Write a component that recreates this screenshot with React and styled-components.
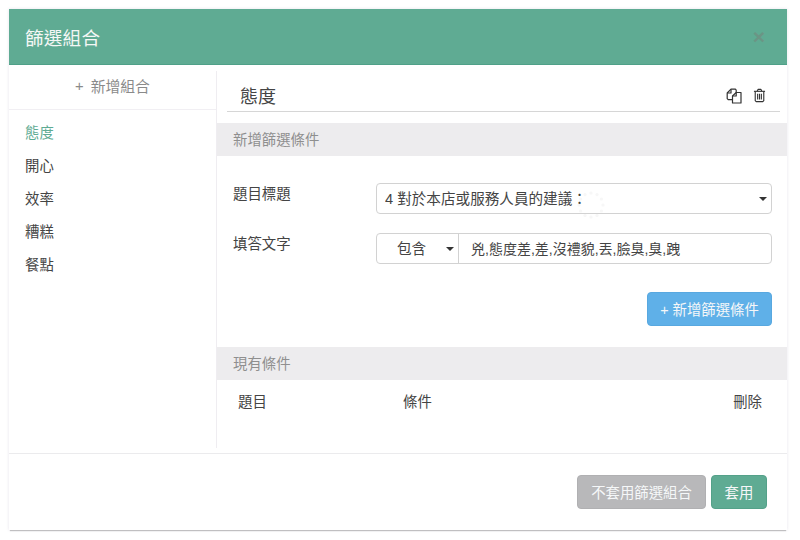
import React from "react";
import styled, { createGlobalStyle } from "styled-components";

const GlobalStyle = createGlobalStyle`
  html, body {
    margin: 0;
    padding: 0;
    background: #fff;
    font-family: "Liberation Sans", "Noto Sans CJK TC", sans-serif;
    font-size: 14.4px;
    color: #444;
  }
  * { box-sizing: border-box; }
`;

const Page = styled.div`
  width: 800px;
  height: 540px;
  padding: 9px 13px 9px 9px;
`;

const Modal = styled.div`
  width: 778px;
  height: 521px;
  display: flex;
  flex-direction: column;
  background: #fff;
  box-shadow: 0 2px 1px -1px rgba(0, 0, 0, 0.22), 0 0 3px rgba(80, 60, 110, 0.14);
`;

const Header = styled.div`
  height: 56px;
  flex: none;
  display: flex;
  align-items: center;
  justify-content: space-between;
  padding: 0 22px 0 16px;
  background: #5fab93;
  border-bottom: 1px solid #4fa088;
`;

const Title = styled.div`
  color: #f4f7f5;
  font-size: 18.6px;
  letter-spacing: 0.2px;
`;

const Close = styled.span`
  color: #6b9585;
  font-size: 21px;
  font-weight: 700;
  line-height: 1;
`;

const Body = styled.div`
  flex: 1;
  display: flex;
  min-height: 0;
`;

const Sidebar = styled.div`
  width: 208px;
  flex: none;
  height: 377px;
  margin-top: 6px;
  border-right: 1px solid #efedf1;
`;

const AddGroup = styled.div`
  height: 39px;
  padding-bottom: 9px;
  display: flex;
  align-items: center;
  justify-content: center;
  gap: 7px;
  font-size: 14.8px;
  color: #8a8a8a;
  border-bottom: 1px solid #f1eff3;
`;

const GroupList = styled.ul`
  list-style: none;
  margin: 7px 0 0;
  padding: 0 0 0 16px;
`;

const GroupItem = styled.li`
  height: 33px;
  line-height: 33px;
  color: ${(p) => (p.$active ? "#5fab93" : "#444")};
`;

const Main = styled.div`
  flex: 1;
  min-width: 0;
`;

const NameRow = styled.div`
  height: 47px;
  margin: 0 7px 11px 10px;
  padding: 14px 14px 0 13px;
  display: flex;
  align-items: center;
  justify-content: space-between;
  border-bottom: 1px solid #d6d6d6;
`;

const Name = styled.div`
  font-size: 18px;
  color: #444;
`;

const IconGroup = styled.div`
  display: flex;
  align-items: center;
  gap: 11px;
  color: #333;
  margin-top: 1px;
`;

const SectionBar = styled.div`
  height: 33px;
  line-height: 35px;
  padding-left: 16px;
  background: #edecee;
  color: #8f8f8f;
`;

const Form = styled.div`
  padding: 27px 15px 0 16px;
  display: flex;
  flex-direction: column;
  gap: 19px;
`;

const FormRow = styled.div`
  display: flex;
  align-items: center;
  height: 31px;
`;

const Label = styled.label`
  width: 143px;
  flex: none;
  margin-top: -12px;
  color: #444;
`;

const Control = styled.div`
  flex: 1;
  display: flex;
  height: 31px;
  border: 1px solid #d2d2d2;
  border-radius: 4px;
  background: #fff;
`;

const SelectWrap = styled.div`
  position: relative;
  flex: ${(p) => (p.$compact ? "none" : "1")};
  width: ${(p) => (p.$compact ? "82px" : "auto")};
  border-right: ${(p) => (p.$compact ? "1px solid #d2d2d2" : "none")};

  &::after {
    content: "";
    position: absolute;
    top: 13px;
    right: ${(p) => (p.$compact ? "4px" : "4px")};
    border-left: 4.5px solid transparent;
    border-right: 4.5px solid transparent;
    border-top: 4.5px solid #333;
    pointer-events: none;
  }
`;

const Select = styled.select`
  appearance: none;
  width: 100%;
  height: 100%;
  border: 0;
  outline: 0;
  background: transparent;
  font: inherit;
  font-size: 14.6px;
  color: #444;
  padding: 0 0 0 ${(p) => (p.$center ? "20px" : "8px")};
`;

const TextInput = styled.input`
  flex: 1;
  min-width: 0;
  border: 0;
  outline: 0;
  background: transparent;
  font: inherit;
  font-size: 14px;
  color: #444;
  padding: 0 12px 2px;
  border-radius: 0 4px 4px 0;
`;

const AddRow = styled.div`
  display: flex;
  justify-content: flex-end;
  padding: 28px 15px 21px 0;
`;

const Button = styled.button`
  height: 34px;
  padding: 0 0 2px;
  width: ${(p) => p.$width};
  border: 1px solid ${(p) => p.$edge};
  border-radius: 4px;
  background: ${(p) => p.$fill};
  color: #f5f7f8;
  font: inherit;
`;

const Columns = styled.div`
  display: grid;
  grid-template-columns: 165px 1fr auto;
  padding: 14px 25px 0 21px;
  color: #444;
  line-height: 16px;
`;

const Footer = styled.div`
  flex: none;
  height: 77px;
  border-top: 1px solid #ebebed;
  display: flex;
  justify-content: flex-end;
  align-items: flex-start;
  gap: 5px;
  padding: 21px 20px 0 0;
`;

const Spinner = styled.svg`
  position: absolute;
  left: 573px;
  top: 187px;
  opacity: 0.4;
`;

function CopyIcon() {
  return (
    <svg width="16" height="16" viewBox="0 0 16 16" fill="none" stroke="currentColor" strokeWidth="1.2" strokeLinejoin="round">
      <path d="M10.2 4.5V2.2L9.4 1.2H5L1.2 5V10.6L2.2 11.6H6" />
      <path d="M5 1.2V5H1.2" />
      <path d="M6.5 15V8L10.2 4.5H15V15Z" fill="#fff" />
      <path d="M10.2 4.5V8H6.5" />
    </svg>
  );
}

function TrashIcon() {
  return (
    <svg width="13" height="15" viewBox="0 0 14 16" fill="none" stroke="currentColor" strokeWidth="1.2" strokeLinejoin="round">
      <path d="M1 3.5H13" />
      <path d="M4.6 3.5L5.4 1.4H8.6L9.4 3.5" />
      <path d="M2.4 3.5V13.6L3.4 14.6H10.6L11.6 13.6V3.5" />
      <path d="M5 6V12.4M7 6V12.4M9 6V12.4" />
    </svg>
  );
}

function LoadingDots() {
  const dots = Array.from({ length: 12 }, (_, i) => {
    const a = (i / 12) * Math.PI * 2;
    return <circle key={i} cx={18 + Math.cos(a) * 12} cy={18 + Math.sin(a) * 12} r="1.6" fill="#ececec" />;
  });
  return (
    <Spinner width="36" height="36" viewBox="0 0 36 36">
      {dots}
    </Spinner>
  );
}

export default function App() {
  const groups = ["態度", "開心", "效率", "糟糕", "餐點"];
  return (
    <Page>
      <GlobalStyle />
      <Modal>
        <Header>
          <Title>篩選組合</Title>
          <Close>×</Close>
        </Header>
        <Body>
          <Sidebar>
            <AddGroup>
              <span>+</span>
              <span>新增組合</span>
            </AddGroup>
            <GroupList>
              {groups.map((g, i) => (
                <GroupItem key={g} $active={i === 0}>
                  {g}
                </GroupItem>
              ))}
            </GroupList>
          </Sidebar>
          <Main>
            <NameRow>
              <Name>態度</Name>
              <IconGroup>
                <CopyIcon />
                <TrashIcon />
              </IconGroup>
            </NameRow>
            <SectionBar>新增篩選條件</SectionBar>
            <Form>
              <FormRow>
                <Label>題目標題</Label>
                <Control>
                  <SelectWrap>
                    <Select defaultValue="4">
                      <option value="4">4 對於本店或服務人員的建議：</option>
                    </Select>
                  </SelectWrap>
                </Control>
              </FormRow>
              <FormRow>
                <Label>填答文字</Label>
                <Control>
                  <SelectWrap $compact>
                    <Select $center defaultValue="in">
                      <option value="in">包含</option>
                    </Select>
                  </SelectWrap>
                  <TextInput defaultValue="兇,態度差,差,沒禮貌,丟,臉臭,臭,跩" />
                </Control>
              </FormRow>
            </Form>
            <AddRow>
              <Button $width="125px" $fill="#5fb0e8" $edge="#58a8e0">
                + 新增篩選條件
              </Button>
            </AddRow>
            <SectionBar>現有條件</SectionBar>
            <Columns>
              <span>題目</span>
              <span>條件</span>
              <span>刪除</span>
            </Columns>
          </Main>
        </Body>
        <Footer>
          <Button $width="129px" $fill="#b8b8ba" $edge="#b0b0b2">
            不套用篩選組合
          </Button>
          <Button $width="56px" $fill="#5fab93" $edge="#54a189">
            套用
          </Button>
        </Footer>
      </Modal>
      <LoadingDots />
    </Page>
  );
}
